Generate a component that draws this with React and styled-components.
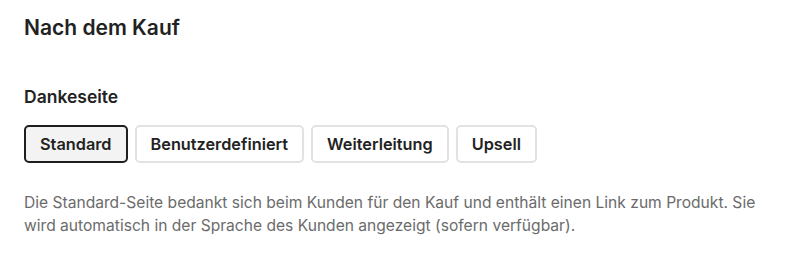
import React, { useState } from "react";
import styled, { createGlobalStyle } from "styled-components";

const GlobalStyle = createGlobalStyle`
  body {
    margin: 0;
    background: #fff;
    font-family: Inter, "Noto Sans", sans-serif;
    color: #222;
  }
`;

const options = ["Standard", "Benutzerdefiniert", "Weiterleitung", "Upsell"];

const App = () => {
  const [active, setActive] = useState("Standard");

  return (
    <Wrapper>
      <GlobalStyle />
      <Title>Nach dem Kauf</Title>
      <Label>Dankeseite</Label>
      <ButtonRow>
        {options.map((o) => (
          <Option key={o} $active={active === o} onClick={() => setActive(o)}>
            {o}
          </Option>
        ))}
      </ButtonRow>
      <Description>
        Die Standard-Seite bedankt sich beim Kunden für den Kauf und enthält
        einen Link zum Produkt. Sie wird automatisch in der Sprache des Kunden
        angezeigt (sofern verfügbar).
      </Description>
    </Wrapper>
  );
};

const Wrapper = styled.div`
  padding: 16px 24px 0;
  width: 808px;
  box-sizing: border-box;
`;

const Title = styled.h2`
  margin: 0;
  font-size: 21px;
  font-weight: 600;
  line-height: 24px;
  color: #222;
`;

const Label = styled.h3`
  margin: 46px 0 0;
  font-size: 17.5px;
  font-weight: 600;
  line-height: 22px;
  color: #222;
`;

const ButtonRow = styled.div`
  display: flex;
  gap: 7px;
  margin-top: 17px;
`;

const Option = styled.button`
  height: 38px;
  padding: 0 14px;
  border-radius: 5px;
  font-family: inherit;
  font-size: 16.3px;
  font-weight: 600;
  color: #222;
  cursor: pointer;
  background: ${(p) => (p.$active ? "#f3f3f3" : "#fff")};
  border: ${(p) => (p.$active ? "2px solid #1f1f1f" : "2px solid #e2e2e2")};
`;

const Description = styled.p`
  margin: 28px 0 0;
  max-width: 760px;
  font-size: 15.6px;
  line-height: 23px;
  color: #6b6b6b;
`;

export default App;
